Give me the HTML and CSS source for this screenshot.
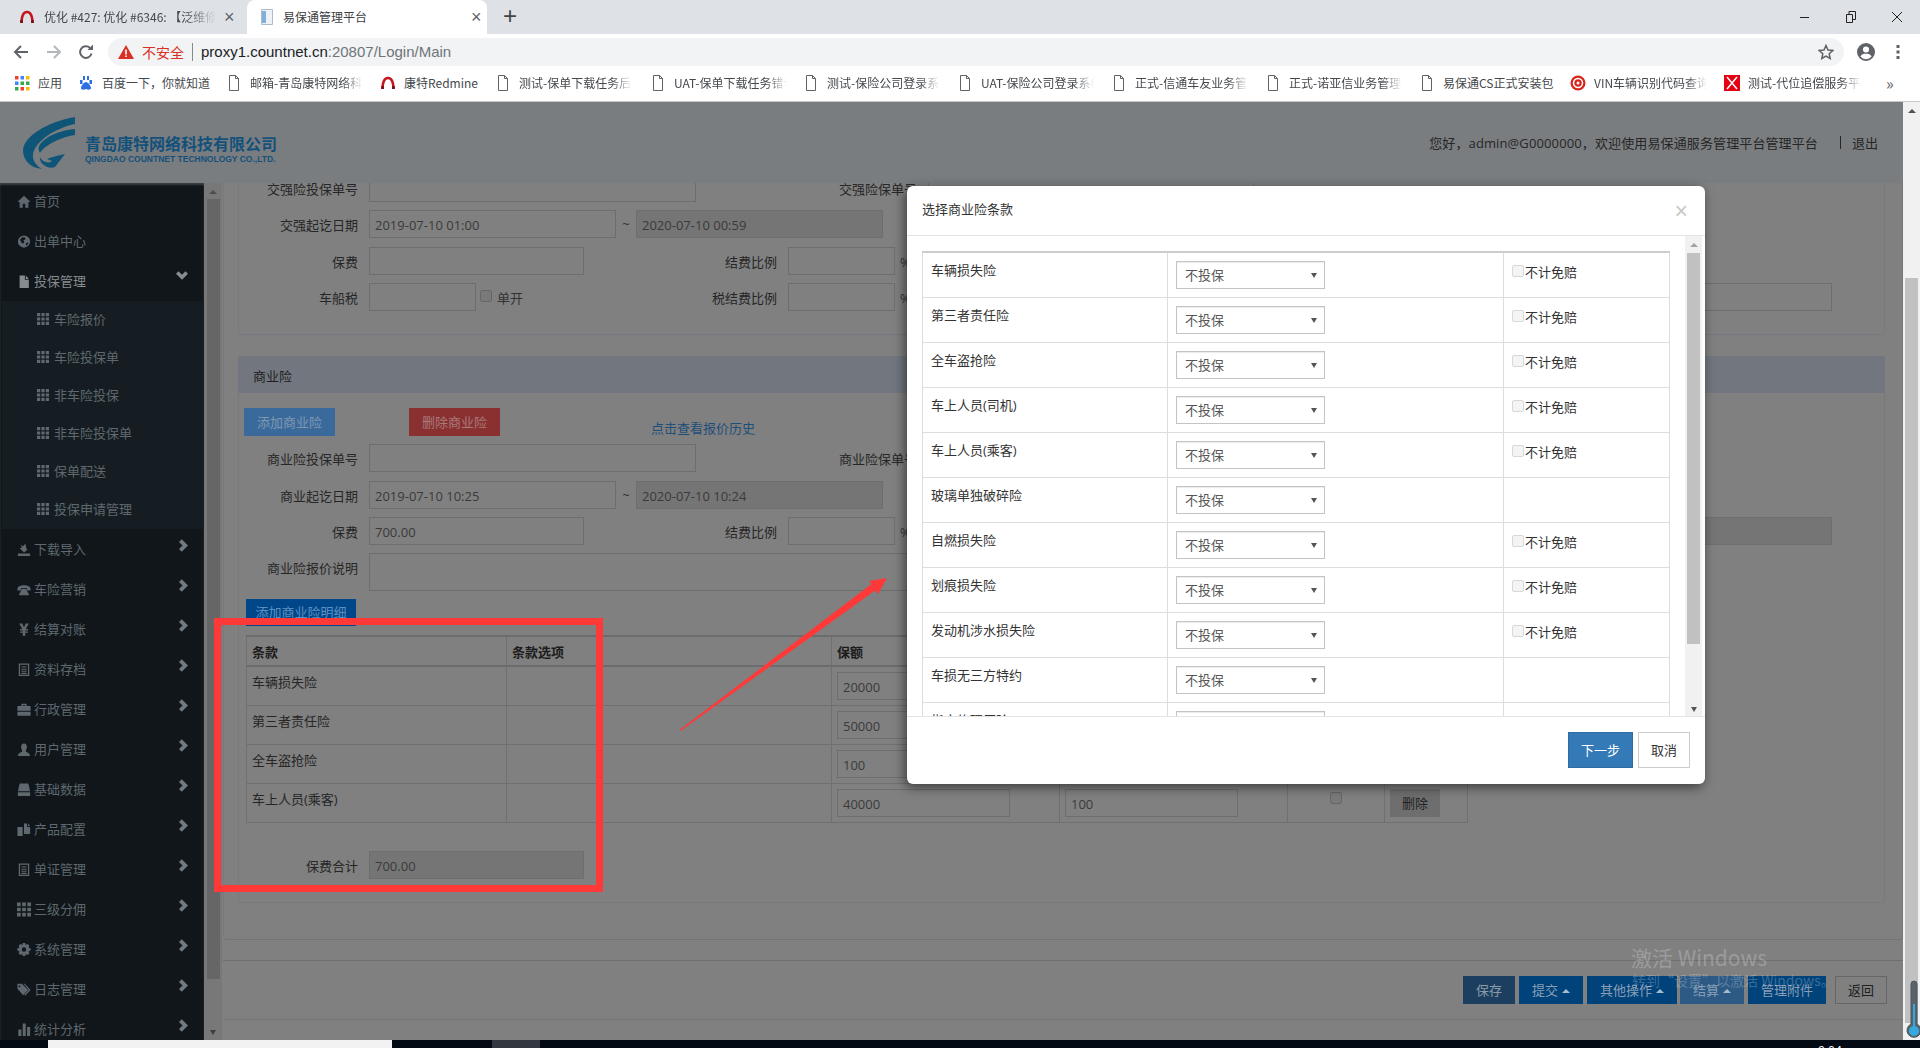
FILE: index.html
```html
<!DOCTYPE html>
<html lang="zh-CN">
<head>
<meta charset="utf-8">
<title>易保通管理平台</title>
<link rel="stylesheet" href="styles.css">
</head>
<body>
<svg class="defs" width="0" height="0" aria-hidden="true">
  <symbol id="i-home" viewBox="0 0 16 16"><path d="M8 1.5 0.5 8.5H3V15H6.5V10.5H9.5V15H13V8.5H15.5Z"/></symbol>
  <symbol id="i-globe" viewBox="0 0 16 16"><path fill-rule="evenodd" d="M8 1a7 7 0 1 0 0 14A7 7 0 0 0 8 1ZM3.5 6 6 3.2l3 .3.8 2-2.3 1.2.7 2.3-1.7 1.5L4.6 8.2ZM10 10.5l2.6-1.7.3 1.7-2 2.3Z"/></symbol>
  <symbol id="i-file" viewBox="0 0 16 16"><path d="M3 1H9V6H13.5V15.5H3ZM10 1 13.5 5H10Z"/></symbol>
  <symbol id="i-th" viewBox="0 0 15 15"><path d="M0 0H4V4H0ZM5.5 0H9.5V4H5.5ZM11 0H15V4H11ZM0 5.5H4V9.5H0ZM5.5 5.5H9.5V9.5H5.5ZM11 5.5H15V9.5H11ZM0 11H4V15H0ZM5.5 11H9.5V15H5.5ZM11 11H15V15H11Z"/></symbol>
  <symbol id="i-import" viewBox="0 0 16 16"><path d="M1 12.5H15V15.5H1ZM4 2 6.5 4.5 9.5 1.5 11 8 12.5 8 8 11.5 3 6.5 5.5 6Z"/></symbol>
  <symbol id="i-phone" viewBox="0 0 16 16"><path d="M0.5 7C1.5 2 14.5 2 15.500 7V9H11.500V6.500H4.500V9H0.500ZM5.500 7.500H10.500L14 14.500H2Z"/></symbol>
  <symbol id="i-yen" viewBox="0 0 16 16"><path d="M2.500 1H6L8 5.500 10 1H13.500L10 7.500H12.500V9H9.500V10.300H12.500V11.800H9.500V15H6.500V11.800H3.500V10.300H6.500V9H3.500V7.500H6Z"/></symbol>
  <symbol id="i-list" viewBox="0 0 16 16"><path fill-rule="evenodd" d="M2 1H14V15.500H2ZM3.500 2.500V14H12.500V2.500ZM5 4.500H11V5.700H5ZM5 7H11V8.200H5ZM5 9.500H11V10.700H5ZM5 11.800H11V13H5Z"/></symbol>
  <symbol id="i-case" viewBox="0 0 16 16"><path fill-rule="evenodd" d="M5 4V1.500H11V4H15.500V9.500H0.500V4ZM6.500 4H9.500V3H6.500ZM0.500 10.500H15.500V15H0.500Z"/></symbol>
  <symbol id="i-user" viewBox="0 0 16 16"><path d="M8 1C10.500 1 11.500 3 11.300 5.500 11.200 7.500 10 9 10 10 10 11 15 11.500 15 15.500H1C1 11.500 6 11 6 10 6 9 4.800 7.500 4.700 5.500 4.500 3 5.500 1 8 1Z"/></symbol>
  <symbol id="i-hdd" viewBox="0 0 16 16"><path d="M3 1H13L15 10H1ZM1 11H15V15.500H1Z"/></symbol>
  <symbol id="i-copy" viewBox="0 0 16 16"><path d="M0.500 5H6.500V15.500H0.500ZM8 1H11.500V5H15V13H8ZM12.500 1.200 15 4H12.500Z"/></symbol>
  <symbol id="i-tags" viewBox="0 0 17 16"><path fill-rule="evenodd" d="M0.500 1H6L13.500 8.500 7.500 15 0.500 7ZM3 3a1.200 1.200 0 1 0 0 2.400A1.200 1.200 0 0 0 3 3ZM8 1H9.500L16.500 8.500 10 15.500 9 14.500 14.300 8.500Z"/></symbol>
  <symbol id="i-stats" viewBox="0 0 16 16"><path d="M1.500 8H5V15.500H1.500ZM6.500 1H10V15.500H6.500ZM11.500 5H15V15.500H11.500Z"/></symbol>
  <symbol id="i-cog" viewBox="0 0 16 16"><path fill-rule="evenodd" d="M6.500 0.500H9.500L10 2.800 12.200 1.800 14.200 3.800 13.200 6 15.500 6.500V9.500L13.200 10 14.200 12.200 12.200 14.200 10 13.200 9.500 15.500H6.500L6 13.200 3.800 14.200 1.800 12.200 2.800 10 0.500 9.500V6.500L2.800 6 1.800 3.800 3.800 1.800 6 2.800ZM8 5.500a2.500 2.500 0 1 0 0 5 2.500 2.500 0 0 0 0-5Z"/></symbol>
  <symbol id="i-right" viewBox="0 0 10 14"><path d="M3 0 10 7 3 14 0 11 4 7 0 3Z"/></symbol>
  <symbol id="i-down" viewBox="0 0 14 10"><path d="M0 3 3 0 7 4 11 0 14 3 7 10Z"/></symbol>
  <symbol id="i-doc" viewBox="0 0 16 16"><path fill="none" stroke="#5f6368" d="M3.500 .5H9.500L12.500 3.500V15.500H3.500ZM9.500 .5V3.500H12.500"/></symbol>
  <symbol id="i-redmine" viewBox="0 0 16 16"><path fill="none" stroke="#c4141e" stroke-width="2.600" d="M2.500 14C2.500 8 4 3 8 3S13.500 8 13.500 14"/><path stroke="#7a1016" stroke-width="2.600" d="M2.500 14V11M13.500 14V11"/></symbol>
</svg>

<div class="tabstrip">
  <div class="tab tab-bg">
    <svg class="fav"><use href="#i-redmine"/></svg>
    <span class="tab-title fade">优化 #427: 优化 #6346: 【泛维修】保单下载</span>
    <span class="tab-x">×</span>
  </div>
  <div class="tab tab-on">
    <svg class="fav" viewBox="0 0 16 16"><path fill="#eef2f7" stroke="#aebccb" d="M2.500 .5H13.500V15.500H2.500Z"/><path fill="#7fb0dc" d="M3 2H7V14H3Z"/></svg>
    <span class="tab-title">易保通管理平台</span>
    <span class="tab-x dark">×</span>
  </div>
  <span class="tab-new">+</span>
  <div class="winctl">
    <svg width="16" height="16" viewBox="0 0 16 16"><path stroke="#222" d="M3 8.500H12"/></svg>
    <svg width="16" height="16" viewBox="0 0 16 16"><path fill="none" stroke="#222" d="M3.500 5.500H9.500V13.500H3.500ZM6 5V2.500H12.500V10.500H10"/></svg>
    <svg width="16" height="16" viewBox="0 0 16 16"><path stroke="#222" d="M3 3 13 13M13 3 3 13"/></svg>
  </div>
</div>

<div class="toolbar">
  <svg class="tb-btn" viewBox="0 0 16 16"><path fill="none" stroke="#5f6368" stroke-width="2" d="M15 8H2M8 2 2 8 8 14"/></svg>
  <svg class="tb-btn tb-fwd" viewBox="0 0 16 16"><path fill="none" stroke="#b4b7bb" stroke-width="2" d="M1 8H14M8 2 14 8 8 14"/></svg>
  <svg class="tb-btn tb-rel" viewBox="0 0 16 16"><path fill="none" stroke="#5f6368" stroke-width="2" d="M13.500 9.500A5.800 5.800 0 1 1 12 4"/><path fill="#5f6368" d="M9.500 6H15V0.500Z"/></svg>
  <div class="omni">
    <svg class="warn" viewBox="0 0 16 16"><path fill="#d93025" d="M8 1 16 15H0Z"/><path fill="#fff" d="M7.200 5.500H8.800V10.500H7.200ZM7.200 11.500H8.800V13H7.200Z"/></svg>
    <span class="unsafe">不安全</span>
    <span class="omni-sep"></span>
    <span class="url">proxy1.countnet.cn<em>:20807/Login/Main</em></span>
    <svg class="star" viewBox="0 0 16 16"><path fill="none" stroke="#5f6368" stroke-width="1.500" d="M8 1.500 10 6 14.800 6.500 11.200 9.700 12.200 14.500 8 12 3.800 14.500 4.800 9.700 1.200 6.500 6 6Z"/></svg>
  </div>
  <svg class="avatar" viewBox="0 0 16 16"><path fill-rule="evenodd" fill="#5f6368" d="M8 0a8 8 0 1 0 0 16A8 8 0 0 0 8 0ZM8 3a2.700 2.700 0 1 1 0 5.400A2.700 2.700 0 0 1 8 3ZM3 12c.8-2 3-2.500 5-2.500s4.200.5 5 2.500a6.500 6.500 0 0 1-10 0Z"/></svg>
  <svg class="kebab" viewBox="0 0 4 16"><path fill="#5f6368" d="M.5 1H3.500V4H.5ZM.5 6.500H3.500V9.500H.5ZM.5 12H3.500V15H.5Z"/></svg>
</div>

<div class="bookmarks">
  <div class="bm w64">
    <svg class="bm-i" viewBox="0 0 16 16"><path fill="#ea4335" d="M1 1H4.500V4.500H1Z"/><path fill="#4285f4" d="M6.500 1H10V4.500H6.500ZM1 6.500H4.500V10H1Z"/><path fill="#fbbc05" d="M12 1H15.500V4.500H12ZM12 12H15.500V15.500H12Z"/><path fill="#34a853" d="M6.500 6.500H10V10H6.500ZM12 6.500H15.500V10H12ZM1 12H4.500V15.500H1Z"/><path fill="#ea4335" d="M6.500 12H10V15.500H6.500Z"/></svg>
    <span>应用</span>
  </div>
  <div class="bm w148">
    <svg class="bm-i" viewBox="0 0 16 16"><path fill="#2f6fe4" d="M5 1h2v4H5ZM9 1h2v4H9ZM2 5h2.500v4H2ZM11.500 5H14v4h-2.500ZM8 7c2 0 5 4 5 6 0 2-3 2-5 1-2 1-5 1-5-1 0-2 3-6 5-6Z"/></svg>
    <span>百度一下，你就知道</span>
  </div>
  <div class="bm w154"><svg class="bm-i"><use href="#i-doc"/></svg><span class="fade bm-t">邮箱-青岛康特网络科技有限公司</span></div>
  <div class="bm w115"><svg class="bm-i"><use href="#i-redmine"/></svg><span>康特Redmine</span></div>
  <div class="bm w155"><svg class="bm-i"><use href="#i-doc"/></svg><span class="fade bm-t">测试-保单下载任务后台管理</span></div>
  <div class="bm w153"><svg class="bm-i"><use href="#i-doc"/></svg><span class="fade bm-t">UAT-保单下载任务错误日志</span></div>
  <div class="bm w154"><svg class="bm-i"><use href="#i-doc"/></svg><span class="fade bm-t">测试-保险公司登录系统管理</span></div>
  <div class="bm w154"><svg class="bm-i"><use href="#i-doc"/></svg><span class="fade bm-t">UAT-保险公司登录系统管理</span></div>
  <div class="bm w154"><svg class="bm-i"><use href="#i-doc"/></svg><span class="fade bm-t">正式-信通车友业务管理平台</span></div>
  <div class="bm w154"><svg class="bm-i"><use href="#i-doc"/></svg><span class="fade bm-t">正式-诺亚信业务管理平台后台</span></div>
  <div class="bm w151"><svg class="bm-i"><use href="#i-doc"/></svg><span>易保通CS正式安装包</span></div>
  <div class="bm w154">
    <svg class="bm-i" viewBox="0 0 16 16"><circle cx="8" cy="8" r="7.500" fill="#d8261c"/><circle cx="8" cy="8" r="4.500" fill="none" stroke="#fff" stroke-width="1.500"/><circle cx="8" cy="8" r="1.500" fill="#fff"/></svg>
    <span class="fade bm-t">VIN车辆识别代码查询系统</span>
  </div>
  <div class="bm w154">
    <svg class="bm-i" viewBox="0 0 16 16"><path fill="#e60012" d="M0 0H16V16H0Z"/><path stroke="#fff" stroke-width="1.500" d="M3 2 13 14M13 2 3 14"/></svg>
    <span class="fade bm-t">测试-代位追偿服务平台管理</span>
  </div>
  <span class="bm-more">»</span>
</div>

<div class="app">
  <div class="main">
    <header class="header">
      <svg class="logo" viewBox="0 0 52 52">
        <path fill="#0f5578" d="M52 0V7C33 11 13 23 10 37 9 44 14 49 19 52 8 51 0 44 0 33 1 19 24 5 52 0Z"/>
        <path fill="#0f5578" d="M52 12V18C38 20 22 28 17 36 14 31 16 28 20 24 28 17 40 13 52 12Z"/>
        <path fill="#0f5578" d="M42 37 32 50C24 53 16 46 17 40 19 45 26 47 29 44L24 42C29 40 36 38 42 37Z"/>
      </svg>
      <div class="brand">
        <div class="brand-cn">青岛康特网络科技有限公司</div>
        <div class="brand-en">QINGDAO COUNTNET TECHNOLOGY CO.,LTD.</div>
      </div>
      <div class="welcome">
        <span class="welcome-text">您好，admin@G0000000，欢迎使用易保通服务管理平台管理平台</span>
        <span class="welcome-sep"></span>
        <span>退出</span>
      </div>
    </header>

    <div class="workspace">
      <nav class="sidebar">
        <div class="nav">
          <div class="nav-item"><svg class="nav-i"><use href="#i-home"/></svg><span>首页</span></div>
          <div class="nav-item"><svg class="nav-i"><use href="#i-globe"/></svg><span>出单中心</span></div>
          <div class="nav-item is-open"><svg class="nav-i"><use href="#i-file"/></svg><span>投保管理</span><svg class="chev-d"><use href="#i-down"/></svg></div>
          <div class="subnav">
            <div class="sub-item"><svg class="sub-i"><use href="#i-th"/></svg><span>车险报价</span></div>
            <div class="sub-item"><svg class="sub-i"><use href="#i-th"/></svg><span>车险投保单</span></div>
            <div class="sub-item"><svg class="sub-i"><use href="#i-th"/></svg><span>非车险投保</span></div>
            <div class="sub-item"><svg class="sub-i"><use href="#i-th"/></svg><span>非车险投保单</span></div>
            <div class="sub-item"><svg class="sub-i"><use href="#i-th"/></svg><span>保单配送</span></div>
            <div class="sub-item"><svg class="sub-i"><use href="#i-th"/></svg><span>投保申请管理</span></div>
          </div>
          <div class="nav-item"><svg class="nav-i"><use href="#i-import"/></svg><span>下载导入</span><svg class="chev"><use href="#i-right"/></svg></div>
          <div class="nav-item"><svg class="nav-i"><use href="#i-phone"/></svg><span>车险营销</span><svg class="chev"><use href="#i-right"/></svg></div>
          <div class="nav-item"><svg class="nav-i"><use href="#i-yen"/></svg><span>结算对账</span><svg class="chev"><use href="#i-right"/></svg></div>
          <div class="nav-item"><svg class="nav-i"><use href="#i-list"/></svg><span>资料存档</span><svg class="chev"><use href="#i-right"/></svg></div>
          <div class="nav-item"><svg class="nav-i"><use href="#i-case"/></svg><span>行政管理</span><svg class="chev"><use href="#i-right"/></svg></div>
          <div class="nav-item"><svg class="nav-i"><use href="#i-user"/></svg><span>用户管理</span><svg class="chev"><use href="#i-right"/></svg></div>
          <div class="nav-item"><svg class="nav-i"><use href="#i-hdd"/></svg><span>基础数据</span><svg class="chev"><use href="#i-right"/></svg></div>
          <div class="nav-item"><svg class="nav-i"><use href="#i-copy"/></svg><span>产品配置</span><svg class="chev"><use href="#i-right"/></svg></div>
          <div class="nav-item"><svg class="nav-i"><use href="#i-list"/></svg><span>单证管理</span><svg class="chev"><use href="#i-right"/></svg></div>
          <div class="nav-item"><svg class="nav-i"><use href="#i-th"/></svg><span>三级分佣</span><svg class="chev"><use href="#i-right"/></svg></div>
          <div class="nav-item"><svg class="nav-i"><use href="#i-cog"/></svg><span>系统管理</span><svg class="chev"><use href="#i-right"/></svg></div>
          <div class="nav-item"><svg class="nav-i"><use href="#i-tags"/></svg><span>日志管理</span><svg class="chev"><use href="#i-right"/></svg></div>
          <div class="nav-item"><svg class="nav-i"><use href="#i-stats"/></svg><span>统计分析</span><svg class="chev"><use href="#i-right"/></svg></div>
        </div>
      </nav>
      <div class="vbar vbar-side"><i class="arr up"></i><b class="thumb"></b><i class="arr down"></i></div>

      <section class="content">
        <div class="outer">
          <div class="panel panel-first">
            <div class="rows">
              <div class="row">
                <label class="lbl">交强险投保单号</label><div class="inp w327"></div>
                <label class="lbl lbl-far">交强险保单号</label><div class="inp w326"></div>
                <span class="far-text">上限投保单号 00000</span>
              </div>
              <div class="row">
                <label class="lbl">交强起讫日期</label><div class="inp w247">2019-07-10 01:00</div>
                <span class="tilde">~</span><div class="inp w247 off">2020-07-10 00:59</div>
              </div>
              <div class="row">
                <label class="lbl">保费</label><div class="inp w215"></div>
                <label class="lbl2">结费比例</label><div class="inp w107"></div><span class="pct">%</span>
              </div>
              <div class="row">
                <label class="lbl">车船税</label>
                <div class="fieldset"><div class="inp w107"></div><input class="chk" type="checkbox"><span class="chk-text">单开</span></div>
                <label class="lbl2">税结费比例</label><div class="inp w107"></div><span class="pct">%</span>
                <div class="inp w326 row-end"></div>
              </div>
            </div>
          </div>

          <div class="panel panel-second">
            <div class="panel-head">商业险</div>
            <div class="btnrow">
              <span class="btn btn-add">添加商业险</span>
              <span class="btn btn-del">删除商业险</span>
              <a class="history">点击查看报价历史</a>
            </div>
            <div class="rows">
              <div class="row">
                <label class="lbl">商业险投保单号</label><div class="inp w327"></div>
                <label class="lbl lbl-far">商业险保单号</label><div class="inp w326"></div>
              </div>
              <div class="row">
                <label class="lbl">商业起讫日期</label><div class="inp w247">2019-07-10 10:25</div>
                <span class="tilde">~</span><div class="inp w247 off">2020-07-10 10:24</div>
              </div>
              <div class="row">
                <label class="lbl">保费</label><div class="inp w215">700.00</div>
                <label class="lbl2">结费比例</label><div class="inp w107"></div><span class="pct">%</span>
                <div class="inp w326 off row-end"></div>
              </div>
              <div class="row row-tall">
                <label class="lbl">商业险报价说明</label><div class="inp w850 tall"></div>
              </div>
            </div>
            <span class="btn btn-detail">添加商业险明细</span>
            <table class="grid">
              <colgroup><col class="c1"><col class="c2"><col class="c3"><col class="c4"><col class="c5"><col class="c6"></colgroup>
              <thead><tr><th>条款</th><th>条款选项</th><th>保额</th><th>保费</th><th>不计免赔</th><th>操作</th></tr></thead>
              <tbody>
                <tr><td>车辆损失险</td><td></td><td><div class="inp w173">20000</div></td><td><div class="inp w173">300</div></td><td class="mid"><input class="chk" type="checkbox"></td><td><span class="btn-rm">删除</span></td></tr>
                <tr><td>第三者责任险</td><td></td><td><div class="inp w173">50000</div></td><td><div class="inp w173">200</div></td><td class="mid"><input class="chk" type="checkbox"></td><td><span class="btn-rm">删除</span></td></tr>
                <tr><td>全车盗抢险</td><td></td><td><div class="inp w173">100</div></td><td><div class="inp w173">100</div></td><td class="mid"><input class="chk" type="checkbox"></td><td><span class="btn-rm">删除</span></td></tr>
                <tr><td>车上人员(乘客)</td><td></td><td><div class="inp w173">40000</div></td><td><div class="inp w173">100</div></td><td class="mid"><input class="chk" type="checkbox"></td><td><span class="btn-rm">删除</span></td></tr>
              </tbody>
            </table>
            <div class="row row-total">
              <label class="lbl">保费合计</label><div class="inp w215 off">700.00</div>
            </div>
          </div>
        </div>

        <div class="actions">
          <span class="btn act act-save">保存</span>
          <span class="btn act">提交<i class="caret"></i></span>
          <span class="btn act act-tight">其他操作<i class="caret"></i></span>
          <span class="btn act act-soft">结算<i class="caret"></i></span>
          <span class="btn act">管理附件</span>
          <span class="btn act-back">返回</span>
        </div>
      </section>
    </div>
  </div>
  <div class="vbar vbar-page"><i class="arr up"></i><b class="thumb"></b></div>
</div>

<footer class="taskbar">
  <span class="task-white"></span>
  <span class="task-gray"></span>
  <span class="task-clock">9:04</span>
</footer>

<div class="modal" role="dialog">
  <div class="modal-head"><span>选择商业险条款</span><span class="modal-x">×</span></div>
  <div class="modal-body">
    <div class="modal-scroll">
      <table class="terms">
        <colgroup><col class="t1"><col class="t2"><col class="t3"></colgroup>
        <tr><td>车辆损失险</td><td><div class="sel"><span>不投保</span><i class="arr down"></i></div></td><td><div class="noded"><input class="chk" type="checkbox"><span>不计免赔</span></div></td></tr>
        <tr><td>第三者责任险</td><td><div class="sel"><span>不投保</span><i class="arr down"></i></div></td><td><div class="noded"><input class="chk" type="checkbox"><span>不计免赔</span></div></td></tr>
        <tr><td>全车盗抢险</td><td><div class="sel"><span>不投保</span><i class="arr down"></i></div></td><td><div class="noded"><input class="chk" type="checkbox"><span>不计免赔</span></div></td></tr>
        <tr><td>车上人员(司机)</td><td><div class="sel"><span>不投保</span><i class="arr down"></i></div></td><td><div class="noded"><input class="chk" type="checkbox"><span>不计免赔</span></div></td></tr>
        <tr><td>车上人员(乘客)</td><td><div class="sel"><span>不投保</span><i class="arr down"></i></div></td><td><div class="noded"><input class="chk" type="checkbox"><span>不计免赔</span></div></td></tr>
        <tr><td>玻璃单独破碎险</td><td><div class="sel"><span>不投保</span><i class="arr down"></i></div></td><td></td></tr>
        <tr><td>自燃损失险</td><td><div class="sel"><span>不投保</span><i class="arr down"></i></div></td><td><div class="noded"><input class="chk" type="checkbox"><span>不计免赔</span></div></td></tr>
        <tr><td>划痕损失险</td><td><div class="sel"><span>不投保</span><i class="arr down"></i></div></td><td><div class="noded"><input class="chk" type="checkbox"><span>不计免赔</span></div></td></tr>
        <tr><td>发动机涉水损失险</td><td><div class="sel"><span>不投保</span><i class="arr down"></i></div></td><td><div class="noded"><input class="chk" type="checkbox"><span>不计免赔</span></div></td></tr>
        <tr><td>车损无三方特约</td><td><div class="sel"><span>不投保</span><i class="arr down"></i></div></td><td></td></tr>
        <tr><td>指定修理厂险</td><td><div class="sel"><span>不投保</span><i class="arr down"></i></div></td><td></td></tr>
      </table>
    </div>
    <div class="vbar vbar-modal"><i class="arr up"></i><b class="thumb"></b><i class="arr down"></i></div>
  </div>
  <div class="modal-foot">
    <span class="btn btn-next">下一步</span>
    <span class="btn btn-cancel">取消</span>
  </div>
</div>

<svg class="annot" viewBox="0 0 1920 1048" aria-hidden="true">
  <rect x="217.500" y="621.500" width="382" height="267" fill="none" stroke="#ff3838" stroke-width="7"/>
  <path fill="#ff3838" d="M679.500 730 680.500 731 875 590.500 878 594 887 578 869 581 871.500 584Z"/>
  <path fill="#59636b" d="M1911 984a3 3 0 0 1 6 0v40a7 7 0 1 1-6 0Z" stroke="#4c565e"/>
  <path fill="#35a8e0" d="M1913 1004h2v22a5 5 0 1 1-2 0Z"/>
</svg>
<div class="wm wm-1">激活 Windows</div>
<div class="wm wm-2">转到“设置”以激活 Windows。</div>
</body>
</html>
```
FILE: styles.css
```css
* { box-sizing: border-box; }
html, body { margin: 0; height: 1048px; overflow: hidden; }
body {
  width: 1920px;
  display: flex;
  flex-direction: column;
  font-family: "Open Sans", "Noto Sans CJK SC", sans-serif;
  font-size: 13px;
  line-height: 18px;
  color: #222;
  background: #808080;
  position: relative;
}
.defs { position: absolute; }
.fade { -webkit-mask-image: linear-gradient(90deg, #000 82%, transparent); mask-image: linear-gradient(90deg, #000 82%, transparent); }

/* browser chrome */
.tabstrip { height: 34px; flex: none; display: flex; align-items: stretch; background: #dee1e6; font-family: "Noto Sans CJK SC", sans-serif; font-size: 12px; color: #45484c; }
.tab { display: flex; align-items: center; white-space: nowrap; overflow: hidden; }
.tab-bg { width: 247px; padding-left: 19px; }
.tab-on { width: 240px; padding-left: 12px; background: #fff; border-radius: 8px 8px 0 0; color: #3c4043; }
.fav { width: 16px; height: 16px; flex: none; }
.tab-title { margin-left: 9px; width: 172px; overflow: hidden; }
.tab-on .tab-title { margin-left: 8px; width: 184px; }
.tab-x { font-size: 18px; margin-left: 8px; color: #5f6368; font-family: "Liberation Sans", sans-serif; }
.tab-on .tab-x { margin-left: 4px; }
.tab-new { margin-left: 16px; font-size: 24px; line-height: 32px; color: #444; font-family: "Liberation Sans", sans-serif; }
.winctl { margin-left: auto; display: flex; gap: 30px; align-items: center; padding-right: 15px; }

.toolbar { height: 32px; flex: none; display: flex; align-items: flex-start; padding: 4px 0 0 13px; background: #fff; font-family: "Noto Sans CJK SC", sans-serif; }
.tb-btn { width: 16px; height: 16px; margin-top: 6px; flex: none; }
.tb-fwd { margin-left: 17px; }
.tb-rel { margin-left: 16px; }
.omni { margin-left: 14px; width: 1736px; height: 28px; background: #f1f3f4; border-radius: 14px; display: flex; align-items: center; padding: 0 10px 0 10px; }
.warn { width: 16px; height: 16px; flex: none; }
.unsafe { margin-left: 8px; color: #d93025; font-size: 14px; }
.omni-sep { width: 1px; height: 18px; background: #888; margin: 0 8px; }
.url { font-family: "Liberation Sans", sans-serif; font-size: 15px; color: #202124; }
.url em { font-style: normal; color: #70757a; }
.star { width: 16px; height: 16px; margin-left: auto; margin-right: 0; }
.avatar { width: 18px; height: 18px; margin: 5px 0 0 13px; flex: none; }
.kebab { width: 4px; height: 16px; margin: 6px 0 0 21px; flex: none; }

.bookmarks { height: 36px; flex: none; display: flex; align-items: center; padding: 0 0 1px 14px; background: #fff; border-bottom: 1px solid #c8c8c8; font-family: "Noto Sans CJK SC", sans-serif; font-size: 12px; color: #45484c; white-space: nowrap; }
.bm { display: flex; align-items: center; gap: 8px; flex: none; }
.bm-i { width: 16px; height: 16px; flex: none; }
.bm-t { display: block; width: 113px; overflow: hidden; }
.w64 { width: 64px; } .w115 { width: 115px; } .w148 { width: 148px; } .w151 { width: 151px; }
.w153 { width: 153px; } .w154 { width: 154px; } .w155 { width: 155px; }
.bm-more { margin-left: 8px; font-size: 16px; color: #5f6368; }

/* application */
.app { height: 938px; flex: none; display: flex; background: #fff; }
.main { width: 1903px; flex: none; display: flex; flex-direction: column; background: #808080; }
.header { height: 81px; flex: none; display: flex; align-items: center; padding: 0 25px 0 23px; background: #7a7d80; }
.logo { width: 52px; height: 52px; flex: none; }
.brand { margin-left: 10px; padding-top: 13px; }
.brand-cn { font-size: 16px; line-height: 20px; font-weight: 700; color: #14517a; font-family: "Noto Sans CJK SC", sans-serif; }
.brand-en { font-size: 8.500px; line-height: 13px; font-weight: 700; color: #14517a; font-family: "Liberation Sans", sans-serif; white-space: nowrap; }
.welcome { margin-left: auto; display: flex; align-items: center; color: #262626; }
.welcome-text { letter-spacing: .12px; }
.welcome-sep { width: 1px; height: 13px; background: #262626; margin: 0 11px 0 22px; }

.workspace { flex: 1; min-height: 0; display: flex; }
.sidebar { width: 204px; flex: none; background: #10161a; overflow: hidden; box-shadow: inset 0 2px 2px #3c4044; }
.nav { margin-top: -2px; }
.nav-item { height: 40px; display: flex; align-items: center; padding: 0 16px 0 17px; color: #5e686e; }
.is-open { color: #868c8f; }
.nav-i { width: 14px; height: 15px; flex: none; margin-right: 3px; fill: currentColor; }
.chev { width: 9px; height: 13px; margin: 0 0 8px auto; fill: #6f7a82; }
.chev-d { width: 12px; height: 9px; margin: 0 0 11px auto; fill: #868c8f; }
.subnav { margin-left: 2px; background: #161d22; }
.sub-item { height: 38px; display: flex; align-items: center; padding: 0 0 2px 35px; color: #5e686e; }
.sub-i { width: 12px; height: 12px; flex: none; margin-right: 5px; fill: currentColor; }

.vbar { flex: none; display: flex; flex-direction: column; align-items: center; }
.arr { display: block; width: 0; height: 0; flex: none; border-left: 4px solid transparent; border-right: 4px solid transparent; }
.arr.up { border-bottom: 4px solid #555; }
.arr.down { border-top: 5px solid #555; border-left-width: 3.500px; border-right-width: 3.500px; }
.thumb { display: block; flex: none; width: 13px; }
.vbar-side { width: 18px; background: #787878; padding: 7px 0 5px; }
.vbar-side .arr.up { border-bottom-color: #4e4e4e; margin-bottom: 5px; }
.vbar-side .arr.down { margin-top: auto; border-top-color: #3e3e3e; }
.vbar-side .thumb { height: 780px; background: #666; }
.vbar-page { width: 17px; background: #f1f1f1; padding-top: 7px; }
.vbar-page .arr.up { border-bottom-color: #505050; margin-bottom: 165px; }
.vbar-page .thumb { height: 745px; background: #c1c1c1; }
.vbar-modal { width: 17px; background: #f1f1f1; padding: 7px 0 4px; margin-right: 3px; }
.vbar-modal .arr.up { border-bottom-color: #a3a3a3; margin-bottom: 6px; }
.vbar-modal .thumb { height: 391px; background: #c1c1c1; }
.vbar-modal .arr.down { margin-top: auto; }

.content { flex: 1; min-width: 0; overflow: hidden; padding-left: 1px; display: flex; flex-direction: column; }
.outer { flex: none; margin-top: -21px; padding: 0 17px 36px 14px; border-bottom: 1px solid #737373; border-right: 1px solid #747474; border-left: 1px solid #7a7a7a; border-radius: 0 0 4px 4px; }
.panel { border: 1px solid #797979; border-radius: 3px; }
.panel-first { padding: 12px 0 23px; border-top: 0; border-bottom-color: #737880; }
.panel-second { margin-top: 21px; padding-bottom: 23px; border-top: 0; }
.panel-head { height: 37px; padding: 2px 0 0 15px; line-height: 37px; background: #72777f; margin: 0 -1px; color: #1e1e1e; }
.btnrow { display: flex; padding: 15px 0 0 5px; margin-bottom: 8px; }
.rows { display: flex; flex-direction: column; gap: 8.400px; }
.row { display: flex; height: 28px; align-items: flex-start; white-space: nowrap; }
.row-tall { height: 38px; }
.lbl { width: 119px; margin-right: 11px; flex: none; text-align: right; line-height: 30px; color: #262626; }
.lbl-far { width: 221px; }
.lbl2 { width: 193px; margin-right: 11px; flex: none; text-align: right; line-height: 30px; color: #262626; }
.inp { height: 28px; flex: none; border: 1px solid #6e6e6e; padding-left: 5px; line-height: 29px; color: #3a3a3a; overflow: hidden; }
.off { background: #757575; }
.tall { height: 38px; }
.w107 { width: 107px; } .w173 { width: 173px; } .w215 { width: 215px; } .w247 { width: 247px; }
.w326 { width: 326px; } .w327 { width: 327px; } .w850 { width: 850px; }
.tilde { width: 20px; text-align: center; line-height: 28px; color: #333; flex: none; }
.pct { margin-left: 5px; line-height: 30px; color: #333; }
.far-text { margin-left: 248px; line-height: 2px; color: #333; }
.row-end { margin-left: auto; margin-right: 52px; }
.fieldset { width: 215px; display: flex; align-items: center; height: 28px; flex: none; }
.chk { appearance: none; -webkit-appearance: none; display: block; width: 12px; height: 12px; margin: 0; flex: none; border: 1px solid #676767; border-radius: 2px; background: #7a7a7a; }
.fieldset .chk { margin: -3px 0 0 4px; }
.chk-text { margin: 2px 0 0 5px; color: #333; }
.btn { display: inline-block; flex: none; height: 28px; line-height: 28px; text-align: center; }
.btn-add { width: 91px; background: #3a6a9c; color: #7f98b0; }
.btn-del { width: 91px; margin-left: 74px; background: #8a3030; color: #a87a7a; }
.history { margin-left: 151px; align-self: flex-end; margin-bottom: -1px; color: #1f4e78; }
.btn-detail { display: block; width: 110px; height: 27px; line-height: 27px; margin: 8px 0 0 7px; background: #00478a; color: #5c90c0; }

.grid { margin: 9px 0 0 7px; width: 1221px; table-layout: fixed; border-collapse: collapse; border-top: 2px solid #6c6c6c; }
.grid .c1 { width: 260px; } .grid .c2 { width: 325px; } .grid .c3 { width: 228px; }
.grid .c4 { width: 228px; } .grid .c5 { width: 97px; } .grid .c6 { width: 83px; }
.grid th { height: 30px; padding: 2px 5px 0; text-align: left; font-weight: 700; color: #1c1c1c; border: 1px solid #707070; border-bottom-width: 2px; border-bottom-color: #6c6c6c; }
.grid td { height: 39px; padding: 5px; vertical-align: top; line-height: 20px; border: 1px solid #707070; color: #262626; }
.grid td .inp { line-height: 29px; }
.grid td.mid .chk { margin: 3px auto 0; }
.btn-rm { display: block; width: 50px; height: 28px; line-height: 28px; text-align: center; background: #6e6e6e; color: #222; }
.row-total { margin-top: 28px; }

.actions { height: 60px; flex: none; margin-top: 20px; display: flex; align-items: center; justify-content: flex-end; padding: 0 16px 0 0; border-top: 1px solid #6f6f6f; border-bottom: 1px solid #747474; color: #8a9fb5; }
.act { padding: 0 13px; margin-right: 4px; background: #00427a; }
.act-tight { margin-right: 3px; }
.act-save { background: #1c3f60; color: #8c9aa8; }
.act-soft { background: #2c5a85; }
.caret { display: inline-block; margin-left: 4px; vertical-align: 2px; border-left: 4px solid transparent; border-right: 4px solid transparent; border-bottom: 4px solid #a9bccc; }
.act-back { width: 52px; margin-left: 5px; line-height: 26px; border: 1px solid #666; color: #202020; }

.taskbar { height: 8px; flex: none; position: relative; display: flex; background: #040a14; overflow: hidden; }
.task-white { width: 344px; margin-left: 48px; background: #f2f2f2; }
.task-gray { width: 48px; margin-left: 100px; background: #333840; }
.task-clock { margin: 4px 0 0 1278px; font-size: 12px; line-height: 14px; color: #fff; }

/* modal */
.modal { position: absolute; left: 907px; top: 186px; width: 798px; height: 598px; display: flex; flex-direction: column; background: #fff; border-radius: 6px; box-shadow: -2px 3px 12px rgba(0, 0, 0, .55); color: #333; }
.modal-head { height: 50px; flex: none; display: flex; justify-content: space-between; align-items: center; padding: 0 15px 3px 15px; border-bottom: 1px solid #e5e5e5; }
.modal-x { font-family: "Liberation Sans", sans-serif; font-size: 23px; line-height: 20px; color: #c8c8c8; margin: 3px 2px 0 0; }
.modal-body { flex: 1; min-height: 0; display: flex; }
.modal-scroll { flex: 1; min-width: 0; overflow: hidden; padding: 15px 0 0 15px; }
.terms { width: 747px; table-layout: fixed; border-collapse: collapse; border-top: 2px solid #ccc; }
.t1 { width: 245px; } .t2 { width: 336px; } .t3 { width: 166px; }
.terms td { height: 45px; padding: 8px; vertical-align: top; border: 1px solid #ddd; }
.sel { width: 149px; height: 28px; display: flex; align-items: center; justify-content: space-between; padding: 0 7px 0 8px; border: 1px solid #c4c4c4; box-shadow: inset 0 1px 1px rgba(0, 0, 0, .08); color: #555; }
.noded { display: flex; align-items: flex-start; margin-top: 2px; }
.noded .chk { margin-top: 2px; border-color: #d8d8d8; background: #f4f4f4; }
.noded span { margin: 0 0 0 1px; }
.modal-foot { height: 68px; flex: none; display: flex; justify-content: flex-end; gap: 5px; padding: 15px 15px 0 0; border-top: 1px solid #e5e5e5; }
.btn-next { width: 65px; height: 36px; background: #337ab7; color: #fff; border: 1px solid #2e6da4; line-height: 34px; }
.btn-cancel { width: 52px; height: 36px; line-height: 34px; background: #fff; border: 1px solid #ccc; color: #333; }

/* marks laid over the photographed screen */
.annot { position: absolute; left: 0; top: 0; width: 1920px; height: 1048px; pointer-events: none; }
.wm { position: absolute; white-space: nowrap; color: rgba(255, 255, 255, .24); font-family: "Noto Sans CJK SC", sans-serif; }
.wm-1 { left: 1631px; top: 943px; font-size: 21px; line-height: 28px; }
.wm-2 { left: 1632px; top: 970px; font-size: 14px; line-height: 20px; }
```
